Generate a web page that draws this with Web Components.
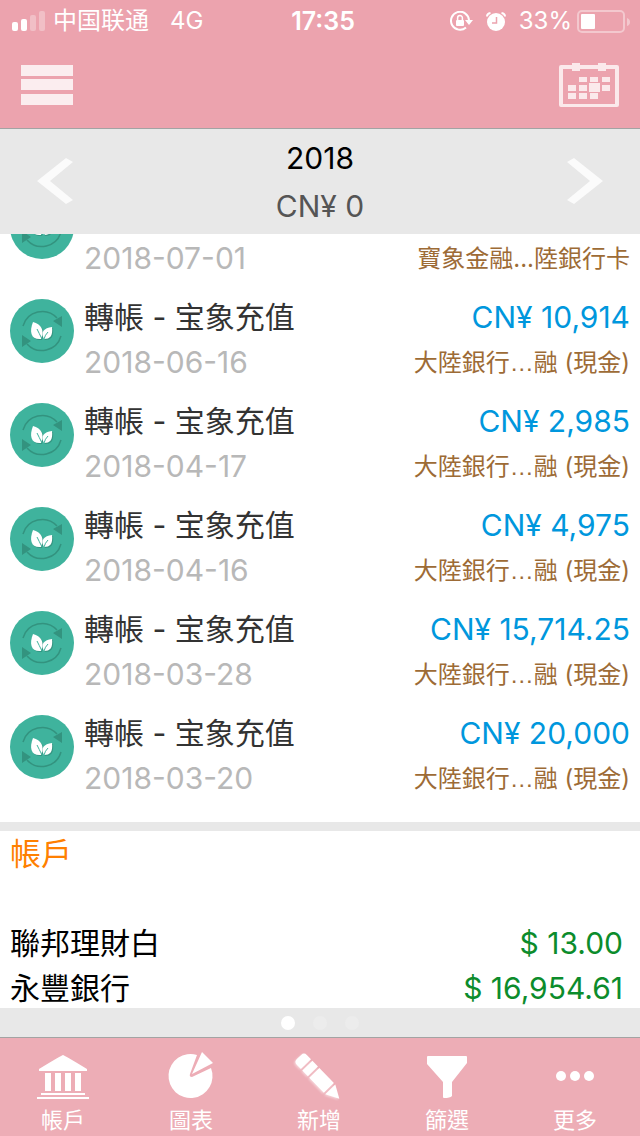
<!DOCTYPE html>
<html lang="zh-Hant">
<head>
<meta charset="utf-8">
<meta name="viewport" content="width=device-width, initial-scale=1">
<title>2018</title>
<style>
  body { margin: 0; font-family: Inter, "Noto Sans CJK TC", sans-serif; background: #fff; }
</style>
</head>
<body>
<ledger-app></ledger-app>
<script>
const define = (name, html, setup) => {
  const template = document.createElement('template');
  template.innerHTML = html;
  customElements.define(name, class extends HTMLElement {
    constructor() {
      super();
      this.attachShadow({ mode: 'open' }).append(template.content.cloneNode(true));
    }
    connectedCallback() { if (setup) setup(this, this.shadowRoot); }
  });
};

define('status-bar', `
<style>
  :host { display: grid; grid-template-columns: 1fr auto 1fr; align-items: center; height: 42px; padding: 0 10px 0 12px; font-size: 24px; line-height: 42px; color: #fff; }
  div { display: flex; align-items: center; }
  .carrier { font-family: Inter, "Noto Sans CJK SC", sans-serif; margin: 0 21px 0 8px; }
  .right { justify-content: flex-end; }
  b { font-size: 25px; font-weight: 600; padding-left: 4px; }
  svg { display: block; flex: none; }
  .lock, .alarm { margin-right: 13px; }
  .battery { margin-left: 5px; }
</style>
<div>
  <svg width="33" height="20" viewBox="0 0 33 20" fill="#fff"><rect y="11" width="6" height="9" rx="2"/><rect x="9" y="8" width="6" height="12" rx="2"/><g opacity=".3"><rect x="18" y="4" width="6" height="16" rx="2"/><rect x="27" width="6" height="20" rx="2"/></g></svg>
  <span class="carrier" lang="zh-Hans">中国联通</span><span>4G</span>
</div>
<b>17:35</b>
<div class="right">
  <svg class="lock" width="23" height="20" viewBox="0 0 23 20"><path d="M19 9A9 9 0 1 0 16 16.500" fill="none" stroke="#fff" stroke-width="2"/><path d="M15 9h8l-4 5z" fill="#fff"/><rect x="6" y="9" width="8" height="6" rx="1" fill="#fff"/><path d="M7.600 9V7a2.400 2.400 0 0 1 4.800 0v2" fill="none" stroke="#fff" stroke-width="1.500"/></svg>
  <svg class="alarm" width="20" height="19" viewBox="0 0 20 19"><circle cx="10" cy="10" r="9" fill="#fff"/><path d="M1 4.500Q1 1.500 4.500 1M19 4.500Q19 1.500 15.500 1" fill="none" stroke="#fff" stroke-width="2"/><path d="M10.500 5v6H6" fill="none" stroke="#eca3ae" stroke-width="1.500"/></svg>
  <span>33%</span>
  <svg class="battery" width="53" height="23" viewBox="0 0 53 23"><rect x="1" y="1" width="46" height="21" rx="4" fill="none" stroke="#fff" stroke-opacity=".4" stroke-width="2"/><rect x="4" y="4" width="14" height="15" rx="1" fill="#fff"/><path d="M50 8q3 1 3 4t-3 4z" fill="#fff" opacity=".4"/></svg>
</div>`);

define('top-bar', `
<style>
  :host { display: flex; justify-content: space-between; align-items: center; height: 86px; padding: 0 21px; box-sizing: border-box; }
  button { display: block; border: 0; padding: 0; background: none; }
  svg { display: block; }
</style>
<button aria-label="選單"><svg width="52" height="40" viewBox="0 0 52 40" fill="#fff" fill-opacity=".8"><path d="M0 0h52v11H0zM0 14h52v11H0zM0 29h52v11H0z"/></svg></button>
<button aria-label="日曆"><svg width="60" height="44" viewBox="0 0 60 44" fill="#fbe9eb"><path fill-rule="evenodd" d="M2 2H58Q60 2 60 4V42Q60 44 58 44H2Q0 44 0 42V4Q0 2 2 2ZM4 6V41H56V6Z"/><path d="M13 0h8v8h-8zM39 0h8v8h-8zM20 14h8v5h-8zM31 14h8v5h-8zM43 14h8v5h-8zM9 22h8v6H9zM20 22h8v6h-8zM30 20h11v9H30zM43 22h8v6h-8zM9 30h8v6H9zM20 30h8v6h-8zM31 30h8v6h-8z"/></svg></button>`);

define('period-header', `
<style>
  :host { display: flex; justify-content: space-between; align-items: center; padding: 5px 36px 4px; background: #e8e8e8; border-top: 1px solid #a3a3a3; text-align: center; font-size: 30px; line-height: 48px; color: #555; }
  button { display: block; border: 0; padding: 0; background: none; }
  svg { display: block; }
  h1 { margin: 0; font: inherit; color: #000; }
</style>
<button aria-label="上一年"><svg width="38" height="48" viewBox="0 0 38 48"><path d="M1 23 30 0 37 4 14 23 37 42 30 46Z" fill="#fbfbfb"/></svg></button>
<div><h1><slot name="period"></slot></h1><slot></slot></div>
<button aria-label="下一年"><svg width="38" height="48" viewBox="0 0 38 48"><path d="M37 23 8 0 1 4 24 23 1 42 8 46Z" fill="#fbfbfb"/></svg></button>`);

define('transfer-icon', `
<style>:host { display: block; } svg { display: block; }</style>
<svg width="64" height="64" viewBox="0 0 64 64"><circle cx="32" cy="32" r="32" fill="#3fb39d"/><g fill="none" stroke="#33937f" stroke-width="1.500"><path d="M13 27A20 20 0 0 1 47 19"/><path d="M51 37A20 20 0 0 1 17 45"/></g><path d="M43 22 52 17V28ZM12 36 21 42 12 48Z" fill="#33937f"/><g transform="translate(1 1)" fill="#359682"><path d="M23 23C31 25 35 31 31 40C21 41 19 33 23 23Z"/><path d="M42 28C43 37 40 40 34 40C30 33 34 29 42 28Z"/></g><path d="M23 23C31 25 35 31 31 40C21 41 19 33 23 23Z" fill="#fff"/><path d="M42 28C43 37 40 40 34 40C30 33 34 29 42 28Z" fill="#fff"/><path d="M27 30Q29 34 32 40M38 33Q35 36 34 40" fill="none" stroke="#3fb39d"/></svg>`);

define('transfer-row', `
<style>
  :host { display: flex; gap: 10px; padding: 6px 10px 8px; line-height: 45px; font-size: 30px; }
  transfer-icon { flex: none; margin-top: 4px; }
  .body { flex: 1; display: grid; grid-template-columns: auto auto; grid-template-rows: 45px 45px; justify-content: space-between; white-space: nowrap; }
  .title { color: #333; }
  .amount { color: #0097dd; text-align: right; }
  .date { color: #b8b8b8; }
  .accounts { color: #9d6b36; text-align: right; font-size: 24px; }
</style>
<transfer-icon></transfer-icon>
<div class="body">
  <div class="title"><slot></slot></div>
  <div class="amount"><slot name="amount"></slot></div>
  <div class="date"><slot name="date"></slot></div>
  <div class="accounts"><slot name="accounts"></slot></div>
</div>`);

define('account-panel', `
<style>
  :host { display: block; border-top: 9px solid #e8e8e8; padding: 0 17px 0 10px; font-size: 30px; line-height: 45px; }
  h2 { margin: 0 0 45px; font-size: 31px; font-weight: 400; color: #ff8000; }
</style>
<h2>帳戶</h2>
<slot></slot>`);

define('account-row', `
<style>
  :host { display: flex; justify-content: space-between; color: #000; }
  .balance { color: #0c8c2c; }
</style>
<span><slot></slot></span><span class="balance"><slot name="balance"></slot></span>`);

define('page-dots', `
<style>
  :host { display: flex; justify-content: center; align-items: center; gap: 18px; height: 29px; background: #e8e8e8; }
  i { width: 14px; height: 14px; border-radius: 50%; background: #ececec; }
  .current { background: #fff; }
</style>
<i class="current"></i><i></i><i></i>`);

const tabIcons = {
  bank: '<path d="M26 0Q27 0 50 14V16H2V14Q25 0 26 0ZM8 18h6v18H8zM18 18h6v18h-6zM28 18h6v18h-6zM38 18h6v18h-6zM4 38h44v2H4zM0 42h52v2H0z"/>',
  chart: '<path d="M32 0A22 22 0 1 0 46 13L27 22Q24 22 25 19Z"/><path d="M37-3 48 8 27 19Z"/>',
  pencil: '<g transform="translate(6 2) rotate(46)"><path d="M4-7H10V7H4Q0 7 0 3V-3Q0-7 4-7ZM12-7H20V7H12ZM22-7H43V7H22ZM45-7 58 0 45 7Z"/></g>',
  filter: '<path d="M7 1H45Q46 1 46 2V8L31 27V41Q29 43 23 43Q22 43 22 42V27L6 9V2Q6 1 7 1Z"/>',
  more: '<circle cx="12" cy="21" r="5"/><circle cx="26" cy="21" r="5"/><circle cx="40" cy="21" r="5"/>'
};

define('tab-item', `
<style>
  :host { display: block; }
  button { display: flex; flex-direction: column; align-items: center; gap: 5px; width: 100%; border: 0; padding: 17px 2px 0 0; background: none; color: #fff; font: 22px/32px Inter, "Noto Sans CJK TC", sans-serif; }
  svg { display: block; overflow: visible; fill: #fff; }
  :host([icon=pencil]) svg { filter: drop-shadow(-1px 1px 1px rgba(255, 255, 255, .5)); }
</style>
<button><svg width="52" height="44" viewBox="0 0 52 44"></svg><span><slot></slot></span></button>`,
(el, root) => { root.querySelector('svg').innerHTML = tabIcons[el.getAttribute('icon')]; });

define('tab-bar', `
<style>
  :host { display: grid; grid-template-columns: repeat(5, 1fr); height: 98px; background: #edadb6; border-top: 1px solid #a3a3a3; }
</style>
<slot></slot>`);

const transfers = [
  ['', '', '2018-07-01', '寶象金融...陸銀行卡'],
  ['轉帳 - 宝象充值', 'CN¥ 10,914', '2018-06-16', '大陸銀行…融 (現金)'],
  ['轉帳 - 宝象充值', 'CN¥ 2,985', '2018-04-17', '大陸銀行…融 (現金)'],
  ['轉帳 - 宝象充值', 'CN¥ 4,975', '2018-04-16', '大陸銀行…融 (現金)'],
  ['轉帳 - 宝象充值', 'CN¥ 15,714.25', '2018-03-28', '大陸銀行…融 (現金)'],
  ['轉帳 - 宝象充值', 'CN¥ 20,000', '2018-03-20', '大陸銀行…融 (現金)']
];

/* The ellipsis of a shortened name is one full CJK cell wide. */
const wideEllipsis = text => text.replace('…', '<span class="cut">…</span>');

define('ledger-app', `
<style>
  :host { display: flex; flex-direction: column; height: 100vh; overflow: hidden; }
  header { background: #eca3ae; }
  header, period-header, page-dots, tab-bar { flex: none; }
  main { flex: 1; min-height: 0; display: flex; flex-direction: column; justify-content: flex-end; overflow: hidden; }
  .transfers { flex: none; padding-bottom: 13px; }
  .cut { font-family: "Liberation Sans", sans-serif; }
  account-panel { flex: none; margin-bottom: -3px; }
</style>
<header><status-bar></status-bar><top-bar></top-bar></header>
<period-header><span slot="period">2018</span>CN¥ 0</period-header>
<main>
  <section class="transfers">${transfers.map(([title, amount, date, accounts]) => `
    <transfer-row>${title}<span slot="amount">${amount}</span><span slot="date">${date}</span><span slot="accounts">${wideEllipsis(accounts)}</span></transfer-row>`).join('')}
  </section>
  <account-panel>
    <account-row>聯邦理財白<span slot="balance">$ 13.00</span></account-row>
    <account-row>永豐銀行<span slot="balance">$ 16,954.61</span></account-row>
  </account-panel>
</main>
<page-dots></page-dots>
<tab-bar>
  <tab-item icon="bank">帳戶</tab-item>
  <tab-item icon="chart">圖表</tab-item>
  <tab-item icon="pencil">新增</tab-item>
  <tab-item icon="filter">篩選</tab-item>
  <tab-item icon="more">更多</tab-item>
</tab-bar>`);
</script>
</body>
</html>
